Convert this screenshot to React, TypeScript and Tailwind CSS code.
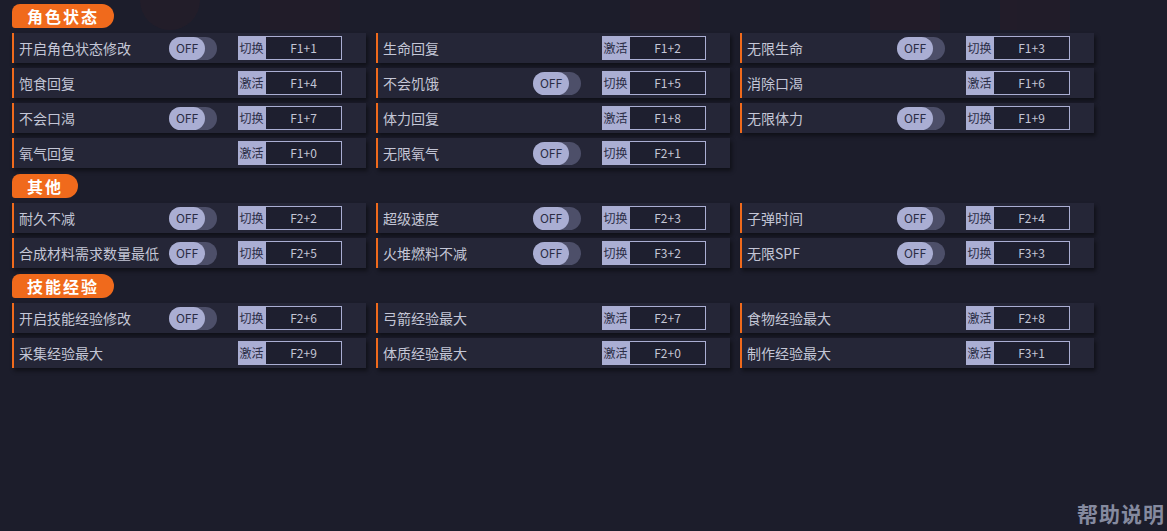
import React from "react";

type Item = { label: string; kind: "toggle" | "act"; key: string };

const sections: { title: string; items: Item[] }[] = [
  {
    title: "角色状态",
    items: [
      { label: "开启角色状态修改", kind: "toggle", key: "F1+1" },
      { label: "生命回复", kind: "act", key: "F1+2" },
      { label: "无限生命", kind: "toggle", key: "F1+3" },
      { label: "饱食回复", kind: "act", key: "F1+4" },
      { label: "不会饥饿", kind: "toggle", key: "F1+5" },
      { label: "消除口渴", kind: "act", key: "F1+6" },
      { label: "不会口渴", kind: "toggle", key: "F1+7" },
      { label: "体力回复", kind: "act", key: "F1+8" },
      { label: "无限体力", kind: "toggle", key: "F1+9" },
      { label: "氧气回复", kind: "act", key: "F1+0" },
      { label: "无限氧气", kind: "toggle", key: "F2+1" },
    ],
  },
  {
    title: "其他",
    items: [
      { label: "耐久不减", kind: "toggle", key: "F2+2" },
      { label: "超级速度", kind: "toggle", key: "F2+3" },
      { label: "子弹时间", kind: "toggle", key: "F2+4" },
      { label: "合成材料需求数量最低", kind: "toggle", key: "F2+5" },
      { label: "火堆燃料不减", kind: "toggle", key: "F3+2" },
      { label: "无限SPF", kind: "toggle", key: "F3+3" },
    ],
  },
  {
    title: "技能经验",
    items: [
      { label: "开启技能经验修改", kind: "toggle", key: "F2+6" },
      { label: "弓箭经验最大", kind: "act", key: "F2+7" },
      { label: "食物经验最大", kind: "act", key: "F2+8" },
      { label: "采集经验最大", kind: "act", key: "F2+9" },
      { label: "体质经验最大", kind: "act", key: "F2+0" },
      { label: "制作经验最大", kind: "act", key: "F3+1" },
    ],
  },
];

function Row({ item }: { item: Item }) {
  return (
    <div className="flex h-[30px] w-[354px] items-center border-l-2 border-[#f06a1c] bg-[#252637] pl-[5px] shadow-[2px_3px_4px_rgba(0,0,0,0.45)]">
      <span className="w-[150px] whitespace-nowrap text-[14px] text-[#c4c6d6]">{item.label}</span>
      <div className="flex h-[23px] w-[48px] items-center">
        {item.kind === "toggle" ? (
          <div className="flex h-[23px] w-[48px] items-center rounded-full bg-[#4d4f69]">
            <div className="flex h-[23px] w-[36px] items-center justify-center rounded-full bg-[#aaaed3] text-[12px] text-[#2b2d45]">
              OFF
            </div>
          </div>
        ) : null}
      </div>
      <div className="ml-[21px] flex h-[24px] w-[104px]">
        <div className="flex h-full w-[27px] items-center justify-center bg-[#aaaed3] text-[12px] text-[#2b2d45]">
          {item.kind === "toggle" ? "切换" : "激活"}
        </div>
        <div className="flex h-full flex-1 items-center justify-center border border-[#aaaed3] bg-[#1e1f2f] text-[12px] text-[#c4c6d6]">
          {item.key}
        </div>
      </div>
    </div>
  );
}

export default function App() {
  return (
    <div
      className="relative flex h-[531px] w-[1167px] flex-col overflow-hidden bg-[#1c1d2b]"
      style={{ fontFamily: '"Noto Sans CJK SC", "Noto Sans", sans-serif' }}
    >
      <div className="pointer-events-none absolute inset-x-0 top-0 flex h-[30px] gap-[60px] pl-[140px] opacity-40">
        <div className="h-[30px] w-[60px] rounded-b-full bg-[#2e1d28]" />
        <div className="h-[30px] w-[80px] bg-[#2b1c27]" />
        <div className="ml-[230px] h-[30px] w-[70px] bg-[#2b1c27]" />
        <div className="ml-[110px] h-[30px] w-[70px] bg-[#2b1c27]" />
        <div className="h-[30px] w-[70px] bg-[#2b1c27]" />
      </div>
      <div className="relative flex flex-col gap-[6px] pl-[12px] pt-[4px]">
        {sections.map((s) => (
          <div key={s.title} className="flex flex-col gap-[5px]">
            <div className="flex h-[24px] w-fit items-center rounded-tl-[8px] rounded-bl-[3px] rounded-r-[12px] bg-[#f06a1c] pl-[15px] pr-[15px] text-[16px] font-bold tracking-[2px] text-white">
              {s.title}
            </div>
            <div className="grid grid-cols-[354px_354px_354px] gap-x-[10px] gap-y-[5px]">
              {s.items.map((it, j) => (
                <Row key={j} item={it} />
              ))}
            </div>
          </div>
        ))}
      </div>
      <div className="relative mt-auto flex justify-end pb-[2px] pr-[2px]">
        <span className="text-[21px] font-bold tracking-[1px] text-[#858a9f]">帮助说明</span>
      </div>
    </div>
  );
}
